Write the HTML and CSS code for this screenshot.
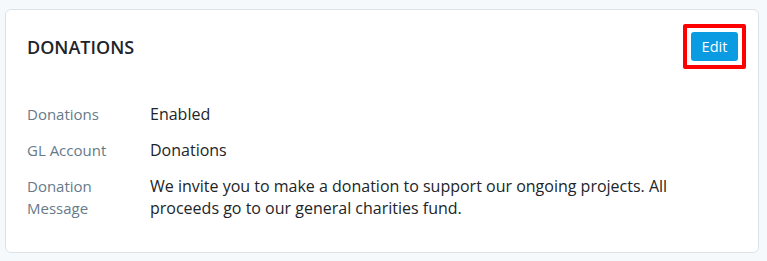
FILE: index.html
```html
<!DOCTYPE html>
<html lang="en">
<head>
<meta charset="utf-8">
<title>Donations</title>
<link rel="stylesheet" href="styles.css">
</head>
<body>
<section class="card">
  <header class="card-header">
    <h2 class="card-title">DONATIONS</h2>
    <span class="highlight"><button class="btn-edit" type="button">Edit</button></span>
  </header>
  <dl class="details">
    <dt>Donations</dt>
    <dd>Enabled</dd>
    <dt>GL Account</dt>
    <dd>Donations</dd>
    <dt>Donation Message</dt>
    <dd>We invite you to make a donation to support our ongoing projects. All proceeds go to our general charities fund.</dd>
  </dl>
</section>
</body>
</html>
```
FILE: styles.css
```css
html, body {
  margin: 0;
  padding: 0;
}
body {
  background: #f6f9fc;
  font-family: "Open Sans", "Noto Sans", sans-serif;
  color: #212529;
  padding: 9px 8px 8px 5px;
}
.card {
  background: #ffffff;
  border: 1px solid #dbe3ea;
  border-radius: 6px;
  padding: 22px 21px 34px 21px;
  height: 244px;
  box-sizing: border-box;
}
.card-header {
  display: flex;
  align-items: center;
  justify-content: space-between;
  height: 29px;
}
.card-title {
  margin: 0;
  font-size: 18px;
  font-weight: 600;
  color: #1d242b;
}
.highlight {
  display: flex;
  border: 4px solid #ff0000;
  border-radius: 2px;
  padding: 4px;
  margin: -8px -9px -8px 0;
}
.btn-edit {
  font-family: inherit;
  background: #0a9be3;
  color: #ffffff;
  border: none;
  border-radius: 3px;
  font-size: 14.5px;
  width: 47px;
  height: 29px;
  padding: 0;
  cursor: pointer;
}
.details {
  display: grid;
  grid-template-columns: 108px 1fr;
  column-gap: 15px;
  row-gap: 14px;
  margin: 42px 0 0 0;
  line-height: 22px;
}
.details dt {
  font-size: 15px;
  color: #667a8a;
}
.details dd {
  margin: 0;
  font-size: 16px;
  color: #212529;
}
```
